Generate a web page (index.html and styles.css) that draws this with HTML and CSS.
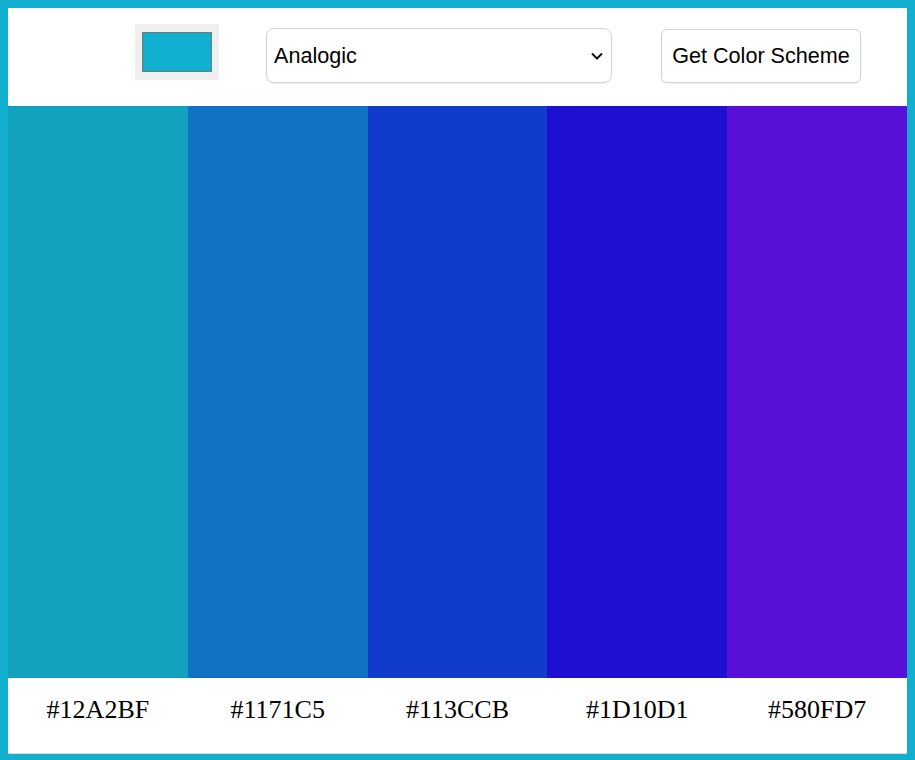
FILE: index.html
```html
<!DOCTYPE html>
<html>
<head>
<meta charset="utf-8">
<link rel="stylesheet" href="styles.css">
</head>
<body>
<div class="app">
  <header class="toolbar">
    <div class="swatch"><div class="swatch-fill"></div></div>
    <div class="select">
      <span class="select-text">Analogic</span>
      <svg class="chevron" width="14" height="10" viewBox="0 0 14 10"><path d="M2 2.5 L7 7.5 L12 2.5" fill="none" stroke="#111" stroke-width="2"/></svg>
    </div>
    <button class="btn">Get Color Scheme</button>
  </header>
  <div class="colors">
    <div class="col c1"></div>
    <div class="col c2"></div>
    <div class="col c3"></div>
    <div class="col c4"></div>
    <div class="col c5"></div>
  </div>
  <footer class="codes">
    <div class="code">#12A2BF</div>
    <div class="code">#1171C5</div>
    <div class="code">#113CCB</div>
    <div class="code">#1D10D1</div>
    <div class="code">#580FD7</div>
  </footer>
</div>
</body>
</html>
```
FILE: styles.css
```css
html, body { margin: 0; height: 100%; }
body {
  background: #12AECE;
  padding: 8px 8px 0;
  box-sizing: border-box;
  overflow: hidden;
}
.app {
  background: #fff;
  height: 745px;
  box-shadow: 0 1px 0 #dcdcdc;
  display: flex;
  flex-direction: column;
}
.toolbar {
  height: 98px;
  display: flex;
  align-items: flex-start;
  padding-left: 127px;
  box-sizing: border-box;
  font-family: "Liberation Sans", Arial, sans-serif;
}
.swatch {
  margin-top: 16px;
  width: 84px;
  height: 56px;
  background: #efefef;
  padding: 8px 7px;
  box-sizing: border-box;
}
.swatch-fill {
  width: 100%;
  height: 100%;
  background: #11AFCF;
  border: 1px solid #767676;
  box-sizing: border-box;
}
.select {
  margin-top: 20px;
  margin-left: 47px;
  width: 346px;
  height: 55px;
  box-sizing: border-box;
  border: 1px solid #d3d3dc;
  border-radius: 8px;
  box-shadow: 0 1px 2px rgba(0,0,0,0.08);
  display: flex;
  align-items: center;
  justify-content: space-between;
  padding: 0 7px 0 7px;
}
.select-text { font-size: 21.6px; color: #000; }
.chevron { margin-right: 0; }
.btn {
  margin-top: 21px;
  margin-left: 49px;
  width: 200px;
  height: 54px;
  box-sizing: border-box;
  background: #fff;
  border: 1px solid #d3d3dc;
  border-radius: 6px;
  box-shadow: 0 1px 2px rgba(0,0,0,0.08);
  font-family: "Liberation Sans", Arial, sans-serif;
  font-size: 21.6px;
  color: #000;
  padding: 0;
}
.colors {
  height: 572px;
  display: flex;
}
.col { flex: 1; }
.c1 { background: #12A2BF; }
.c2 { background: #1171C5; }
.c3 { background: #113CCB; }
.c4 { background: #1D10D1; }
.c5 { background: #580FD7; }
.codes {
  flex: 1;
  display: flex;
  font-family: "Liberation Serif", "Times New Roman", serif;
  font-size: 26px;
  color: #000;
}
.code {
  flex: 1;
  text-align: center;
  padding-top: 17px;
  line-height: 30px;
}
```
